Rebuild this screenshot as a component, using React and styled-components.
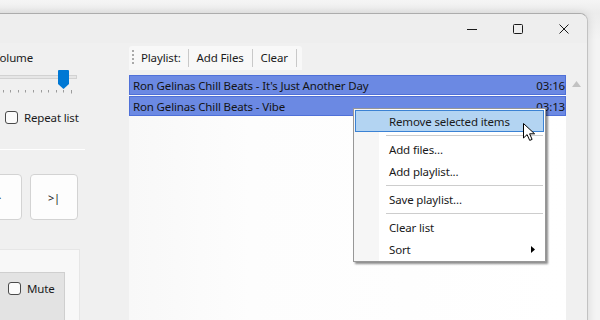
import React from "react";
import styled, { createGlobalStyle } from "styled-components";

const Global = createGlobalStyle`
  html, body { margin: 0; padding: 0; }
  body {
    width: 600px; height: 320px; overflow: hidden;
    background: #f3f3f3;
    font-family: "Noto Sans", "Open Sans", sans-serif;
    font-size: 11.5px;
    letter-spacing: -0.15px;
    color: #1b1b1b;
  }
  * { box-sizing: border-box; }
`;

const Desktop = styled.div`
  position: relative;
  width: 600px;
  height: 320px;
  overflow: hidden;
  padding-top: 13px;
  background: linear-gradient(#f5f5f5, #ececec 13px, #f4f4f4 40px);
`;

const Window = styled.div`
  width: 628px;
  margin-left: -40px;
  height: 340px;
  display: flex;
  flex-direction: column;
  background: #f0f0f0;
  border-top: 1px solid #acacac;
  border-right: 1px solid #c2c2c2;
  border-top-right-radius: 8px;
  box-shadow: 0 0 10px rgba(0, 0, 0, 0.12);
`;

const TitleBar = styled.div`
  height: 29px;
  display: flex;
  justify-content: flex-end;
  background: #eeeeee;
  border-top-right-radius: 8px;
`;

const CaptionButton = styled.div`
  width: 46px;
  height: 29px;
  display: flex;
  align-items: center;
  justify-content: center;
  color: #1a1a1a;
`;

const Client = styled.div`
  flex: 1;
  display: flex;
`;

const LeftPanel = styled.div`
  width: 169px;
  display: flex;
  flex-direction: column;
  overflow: hidden;
`;

const Label = styled.div`
  line-height: 16px;
  margin: ${(p) => p.$mt || 0}px 0 0 ${(p) => p.$ml || 0}px;
  white-space: nowrap;
`;

const SliderBox = styled.div`
  position: relative;
  width: 87px;
  height: 24px;
  margin: 4px 0 0 30px;
`;

const Track = styled.div`
  margin-top: 5px;
  height: 4px;
  background: #e6e6e6;
  border: 1px solid #d2d2d2;
  border-left: none;
`;

const Ticks = styled.svg`
  display: block;
  margin-top: 11px;
`;

const Thumb = styled.svg`
  position: absolute;
  left: 68px;
  top: 0;
`;

const CheckRow = styled.label`
  display: flex;
  align-items: center;
  gap: 6px;
  height: 16px;
  margin: ${(p) => p.$mt || 0}px 0 0 ${(p) => p.$ml || 0}px;
  white-space: nowrap;
`;

const CheckBox = styled.span`
  width: 13px;
  height: 13px;
  border: 1px solid #4a4a4a;
  border-radius: 3px;
  background: #fbfbfb;
  flex: none;
`;

const Rule = styled.div`
  width: 125px;
  height: 1px;
  background: #ffffff;
  margin-top: 24px;
`;

const ButtonRow = styled.div`
  display: flex;
  gap: 8px;
  margin: 24px 0 0 14px;
`;

const TransportButton = styled.div`
  width: 48px;
  height: 46px;
  display: flex;
  align-items: center;
  justify-content: center;
  background: #fdfdfd;
  border: 1px solid #d3d3d3;
  border-radius: 4px;
  font-size: 11px;
  color: #222;
`;

const Group = styled.div`
  width: 120px;
  flex: 1;
  margin-top: 29px;
  background: #f8f8f8;
  border-top: 1px solid #e6e6e6;
  border-right: 1px solid #e6e6e6;
  padding-top: 22px;
`;

const GrayBox = styled.div`
  width: 95px;
  height: 80px;
  margin-left: 10px;
  background: #e3e3e3;
  border: 1px solid #cfcfcf;
  padding: 7px 0 0 37px;
`;

const PlaylistPane = styled.div`
  flex: 1;
  display: flex;
  flex-direction: column;
`;

const Toolbar = styled.div`
  margin-top: 3px;
  width: 173px;
  height: 24px;
  display: flex;
  align-items: center;
  padding-left: 3px;
  background: #f8f8f8;
  border-radius: 3px 3px 0 0;
`;

const Grip = styled.div`
  width: 2px;
  height: 16px;
  background: repeating-linear-gradient(to bottom, #a9a9a9 0 2px, transparent 2px 4px);
`;

const ToolItem = styled.div`
  padding: 0 ${(p) => p.$pad || 8}px;
  line-height: 16px;
  white-space: nowrap;
`;

const ToolSep = styled.div`
  width: 1px;
  height: 18px;
  background: #c9c9c9;
`;

const ListArea = styled.div`
  flex: 1;
  display: flex;
  margin-top: 5px;
`;

const List = styled.div`
  flex: 1;
  background: linear-gradient(to right, #f8f8f8, #fdfdfd 120px, #ffffff);
`;

const Row = styled.div`
  height: 20px;
  margin-bottom: 1px;
  display: flex;
  align-items: center;
  justify-content: space-between;
  padding-left: 3px;
  background: #6b89e3;
  border: 1px solid #4f70d8;
  color: #141414;
  white-space: nowrap;
`;

const ScrollBar = styled.div`
  width: 21px;
  background: #f0f0f0;
  display: flex;
  justify-content: center;
  padding-top: 6px;
`;

const Menu = styled.div`
  position: absolute;
  left: 353px;
  top: 108px;
  width: 193px;
  padding: 1px;
  background: linear-gradient(to right, #f6f6f6 25px, #ffffff 25px);
  border: 1px solid #979797;
  box-shadow: 2px 2px 2px rgba(0, 0, 0, 0.45);
`;

const MenuItem = styled.div`
  height: 22px;
  display: flex;
  align-items: center;
  justify-content: space-between;
  padding: 0 8px 0 33px;
  border: 1px solid ${(p) => (p.$active ? "#3b82d4" : "transparent")};
  background: ${(p) => (p.$active ? "#b3d4f2" : "transparent")};
  color: #1a1a1a;
  white-space: nowrap;
`;

const MenuSep = styled.div`
  height: 1px;
  background: #cdcdcd;
  margin: 3px 1px 2px 31px;
`;

const Cursor = styled.svg`
  position: absolute;
  left: 522px;
  top: 122px;
`;

const tickXs = Array.from({ length: 11 }, (_, i) => 81 - 7.6 * i).filter((x) => x >= 0);

export default function App() {
  return (
    <>
      <Global />
      <Desktop>
        <Window>
          <TitleBar>
            <CaptionButton>
              <svg width="10" height="10" viewBox="0 0 10 10">
                <path d="M0 5.5h10" stroke="#1a1a1a" strokeWidth="1" />
              </svg>
            </CaptionButton>
            <CaptionButton>
              <svg width="10" height="10" viewBox="0 0 10 10">
                <rect x="0.5" y="0.5" width="9" height="9" rx="1" fill="none" stroke="#1a1a1a" strokeWidth="1" />
              </svg>
            </CaptionButton>
            <CaptionButton>
              <svg width="10" height="10" viewBox="0 0 10 10">
                <path d="M0.5 0.5l9 9M9.5 0.5l-9 9" stroke="#1a1a1a" strokeWidth="1" />
              </svg>
            </CaptionButton>
          </TitleBar>
          <Client>
            <LeftPanel>
              <Label $mt={7} $ml={33}>Volume</Label>
              <SliderBox>
                <Track />
                <Ticks width="87" height="4" viewBox="0 0 87 4">
                  {tickXs.map((x, i) => (
                    <rect key={i} x={Math.round(x)} y="0" width="1" height={i === 0 ? 3.5 : 2.5} fill="#9c9c9c" />
                  ))}
                </Ticks>
                <Thumb width="11" height="19" viewBox="0 0 11 19">
                  <path d="M1 0h9a1 1 0 0 1 1 1v13l-5.5 5L0 14V1a1 1 0 0 1 1-1z" fill="#0078d4" />
                </Thumb>
              </SliderBox>
              <CheckRow $mt={15} $ml={45}>
                <CheckBox />
                Repeat list
              </CheckRow>
              <Rule />
              <ButtonRow>
                <TransportButton>&gt;</TransportButton>
                <TransportButton>&gt;|</TransportButton>
              </ButtonRow>
              <Group>
                <GrayBox>
                  <CheckRow>
                    <CheckBox />
                    Mute
                  </CheckRow>
                </GrayBox>
              </Group>
            </LeftPanel>
            <PlaylistPane>
              <Toolbar>
                <Grip />
                <ToolItem $pad={7}>Playlist:</ToolItem>
                <ToolSep />
                <ToolItem>Add Files</ToolItem>
                <ToolSep />
                <ToolItem>Clear</ToolItem>
                <ToolSep />
              </Toolbar>
              <ListArea>
                <List>
                  <Row>
                    <span>Ron Gelinas Chill Beats - It's Just Another Day</span>
                    <span>03:16</span>
                  </Row>
                  <Row>
                    <span>Ron Gelinas Chill Beats - Vibe</span>
                    <span>03:13</span>
                  </Row>
                </List>
                <ScrollBar>
                  <svg width="9" height="6" viewBox="0 0 9 6">
                    <path d="M4.5 0L9 6H0z" fill="#c2c2c2" />
                  </svg>
                </ScrollBar>
              </ListArea>
            </PlaylistPane>
          </Client>
        </Window>
        <Menu>
          <MenuItem $active>Remove selected items</MenuItem>
          <MenuSep />
          <MenuItem>Add files...</MenuItem>
          <MenuItem>Add playlist...</MenuItem>
          <MenuSep />
          <MenuItem>Save playlist...</MenuItem>
          <MenuSep />
          <MenuItem>Clear list</MenuItem>
          <MenuItem>
            Sort
            <svg width="4" height="7" viewBox="0 0 4 7">
              <path d="M0 0L4 3.5L0 7z" fill="#000" />
            </svg>
          </MenuItem>
        </Menu>
        <Cursor width="13" height="20" viewBox="0 0 13 20">
          <path d="M1.5 1.5v14.5l3.6-3.4 2.6 5.8 2.4-1-2.5-5.6h5z" fill="#fff" stroke="#000" strokeWidth="1" strokeLinejoin="round" />
        </Cursor>
      </Desktop>
    </>
  );
}
